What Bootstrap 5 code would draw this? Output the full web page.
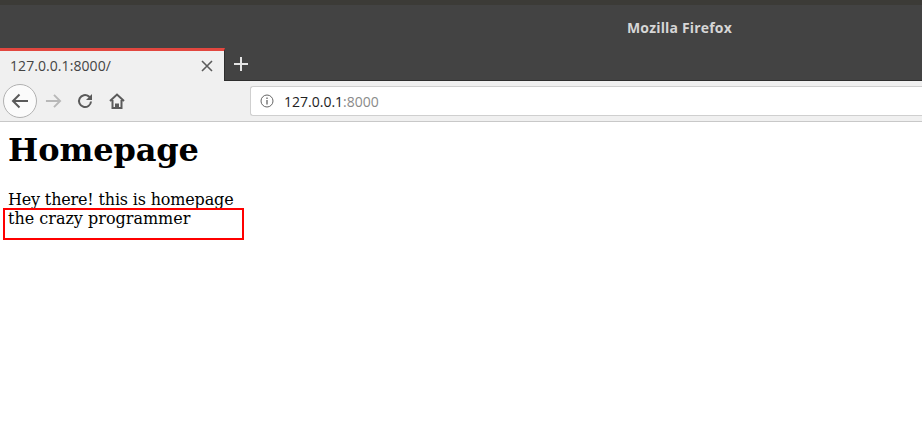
<!DOCTYPE html>
<html lang="en">
<head>
<meta charset="utf-8">
<title>Mozilla Firefox</title>
<link href="https://cdn.jsdelivr.net/npm/bootstrap@5.3.0/dist/css/bootstrap.min.css" rel="stylesheet">
<style>
html,body{height:100%;margin:0;background:#fff;overflow:hidden}
body{font-family:"DejaVu Serif",serif;color:#000}
.ui-font{font-family:"Open Sans","Noto Sans",sans-serif}
.wm-top{height:5px;background:#3c3b37}
.wm-title{height:43px;background:#434343;color:#d6d6d6;font-size:14px;font-weight:700;line-height:1;padding:16px 0 0 627px;letter-spacing:.17px}
.tab-row{height:33px;background:#434343;border-bottom:1px solid #2e2e2e}
.fx-tab{width:225px;height:33px;background:#f0f0f0;border-top:3px solid #e2473f;border-right:1px solid #2e2e2e;padding:0 11px 1px 10px;font-size:14px;color:#444;letter-spacing:.07px}
.new-tab{width:32px;height:32px}
.tool-row{height:41px;background:#f0f0f0;border-bottom:1px solid #c8c8c8;padding-left:3px}
.back-btn{width:34px;height:34px;border:1px solid #b1b1b1;border-radius:50%;background:#fbfbfb;flex:none}
.tool-ico{flex:none;display:block}
.url-box{height:30px;width:700px;flex:none;margin-left:125px;background:#fff;border:1px solid #cfcfcf;border-right:0;border-radius:3px 0 0 3px;font-size:14px;padding-left:9px;color:#222}
.url-dim{color:#8a8a8a}
.url-text{margin-left:2px}
.page-body{padding:8px}
.page-body h1{font-family:"DejaVu Serif",serif;font-size:32px;font-weight:700;line-height:37px;margin:2px 0 21px;letter-spacing:-.1px}
.page-line{font-size:16px;line-height:19px}
.line-tight{letter-spacing:-.17px}
.mark-box{position:absolute;left:3px;top:208px;width:241px;height:32px;border:2px solid #f00}
</style>
</head>
<body class="position-relative">
<div class="ui-font">
  <div class="wm-top"></div>
  <div class="wm-title">Mozilla Firefox</div>
  <div class="tab-row d-flex align-items-start">
    <div class="fx-tab d-flex align-items-center justify-content-between">
      <span>127.0.0.1:8000/</span>
      <svg width="12" height="12" viewBox="0 0 12 12"><path d="M1 1l10 10M11 1L1 11" stroke="#5c5c5c" stroke-width="1.6" fill="none"/></svg>
    </div>
    <div class="new-tab d-flex align-items-center justify-content-center">
      <svg width="14" height="14" viewBox="0 0 14 14"><path d="M7 0v14M0 7h14" stroke="#e4e4e4" stroke-width="2" fill="none"/></svg>
    </div>
  </div>
  <div class="tool-row d-flex align-items-center">
    <div class="back-btn d-flex align-items-center justify-content-center">
      <svg width="18" height="16" viewBox="0 0 18 16"><path d="M17 8H2M8.500 1.500L2 8l6.500 6.500" stroke="#5a5a5a" stroke-width="2" fill="none"/></svg>
    </div>
    <svg class="tool-ico ms-2" width="17" height="16" viewBox="0 0 18 16"><path d="M1 8h15M9.500 1.500L16 8l-6.500 6.500" stroke="#b8b8b8" stroke-width="2" fill="none"/></svg>
    <svg class="tool-ico" style="margin-left:15px" width="16" height="16" viewBox="0 0 16 16"><path d="M14 8.500A6 6 0 1 1 11.800 3.400L14 5.500" stroke="#5a5a5a" stroke-width="2" fill="none"/><path d="M15 1v6H9z" fill="#5a5a5a"/></svg>
    <svg class="tool-ico" style="margin-left:16px" width="16" height="16" viewBox="0 0 16 16"><path d="M1 8l7-6.500L15 8M3.500 7v8h3.500v-3.500h2V15h3.500V7" stroke="#5a5a5a" stroke-width="2" fill="none"/></svg>
    <div class="url-box d-flex align-items-center">
      <svg class="me-2" width="14" height="14" viewBox="0 0 14 14"><circle cx="7" cy="7" r="6" stroke="#666" fill="none"/><path d="M7 6v4.500M7 3.500v1.500" stroke="#666" stroke-width="1.300"/></svg>
      <span class="url-text">127.0.0.1<span class="url-dim">:8000</span></span>
    </div>
  </div>
</div>
<main class="page-body">
  <h1>Homepage</h1>
  <div class="page-line line-tight">Hey there! this is homepage</div>
  <div class="page-line">the crazy programmer</div>
</main>
<div class="mark-box"></div>
</body>
</html>
